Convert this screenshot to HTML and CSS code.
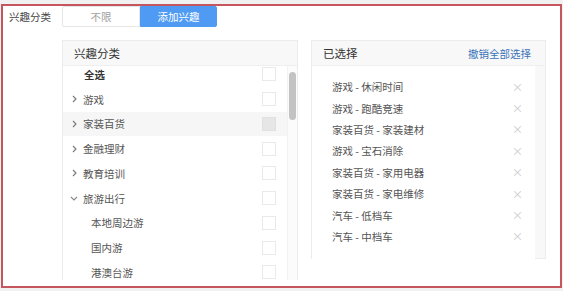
FILE: index.html
```html
<!doctype html>
<html>
<head>
<meta charset="utf-8">
<title>兴趣分类</title>
<link rel="stylesheet" href="styles.css">
</head>
<body>
<div class="frame">
    <div class="field">
        <span class="field-label">兴趣分类</span>
        <div class="tabs">
            <button class="tab">不限</button>
            <button class="tab on">添加兴趣</button>
        </div>
    </div>
    <div class="pick">
        <div class="panel tree">
            <div class="panel-head">兴趣分类</div>
            <div class="tree-body">
                <ul class="tree-list">
                    <li class="row all"><span class="name">全选</span><i class="box"></i></li>
                    <li class="row"><span class="arrow"><svg width="5" height="8" viewBox="0 0 5 8"><path d="M1 1l3 3-3 3" fill="none" stroke="#777" stroke-width="1.1"/></svg></span><span class="name">游戏</span><i class="box"></i></li>
                    <li class="row hover"><span class="arrow"><svg width="5" height="8" viewBox="0 0 5 8"><path d="M1 1l3 3-3 3" fill="none" stroke="#777" stroke-width="1.1"/></svg></span><span class="name">家装百货</span><i class="box"></i></li>
                    <li class="row"><span class="arrow"><svg width="5" height="8" viewBox="0 0 5 8"><path d="M1 1l3 3-3 3" fill="none" stroke="#777" stroke-width="1.1"/></svg></span><span class="name">金融理财</span><i class="box"></i></li>
                    <li class="row"><span class="arrow"><svg width="5" height="8" viewBox="0 0 5 8"><path d="M1 1l3 3-3 3" fill="none" stroke="#777" stroke-width="1.1"/></svg></span><span class="name">教育培训</span><i class="box"></i></li>
                    <li class="row"><span class="arrow down"><svg width="8" height="5" viewBox="0 0 8 5"><path d="M1 1l3 3 3-3" fill="none" stroke="#888" stroke-width="1.1"/></svg></span><span class="name">旅游出行</span><i class="box"></i></li>
                    <li class="row sub"><span class="name">本地周边游</span><i class="box"></i></li>
                    <li class="row sub"><span class="name">国内游</span><i class="box"></i></li>
                    <li class="row sub"><span class="name">港澳台游</span><i class="box"></i></li>
                </ul>
                <div class="bar"><i></i></div>
            </div>
        </div>
        <div class="panel chosen">
            <div class="panel-head">已选择<a class="undo">撤销全部选择</a></div>
            <div class="chosen-body">
                <ul class="chosen-list">
                    <li>游戏 - 休闲时间<span class="x">×</span></li>
                    <li>游戏 - 跑酷竞速<span class="x">×</span></li>
                    <li>家装百货 - 家装建材<span class="x">×</span></li>
                    <li>游戏 - 宝石消除<span class="x">×</span></li>
                    <li>家装百货 - 家用电器<span class="x">×</span></li>
                    <li>家装百货 - 家电维修<span class="x">×</span></li>
                    <li>汽车 - 低档车<span class="x">×</span></li>
                    <li>汽车 - 中档车<span class="x">×</span></li>
                </ul>
            </div>
        </div>
    </div>
</div>
</body>
</html>
```

FILE: styles.css
```css
html,body{
    margin: 0;
    height: 100%;
}
body{
    background-color: #f1f1f1;
    font-family: "Noto Sans CJK SC", sans-serif;
    font-size: 10.5px;
    color: #555;
    padding-top: 4px;
    box-sizing: border-box;
    overflow: hidden;
}
ul{
    list-style: none;
    margin: 0;
    padding: 0;
}
.frame{
    margin: 0 1px;
    width: 561px;
    height: 284px;
    box-sizing: border-box;
    border: 2px solid #c6565d;
    background-color: #fff;
}
.field{
    display: flex;
    align-items: center;
    height: 21px;
}
.field-label{
    width: 53px;
    padding-left: 6px;
    color: #444;
    line-height: 21px;
}
.tabs{
    display: flex;
    height: 21px;
}
.tab{
    font: inherit;
    height: 21px;
    margin: 0;
    padding: 0;
    border: 1px solid #e6e6e6;
    background-color: #fff;
    color: #a0a0a0;
    width: 78px;
    border-radius: 2px 0 0 2px;
}
.tab.on{
    width: 77px;
    border-color: #4f9bf3;
    background-color: #4f9bf3;
    color: #fff;
    border-radius: 0 2px 2px 0;
}

.pick{
    display: flex;
    align-items: flex-start;
    gap: 13px;
    margin: 13px 0 0 59px;
}
.panel{
    box-sizing: border-box;
    border: 1px solid #ececec;
    background-color: #f8f8f8;
}
.panel-head{
    display: flex;
    justify-content: space-between;
    align-items: center;
    height: 24px;
    padding: 0 14px 0 11px;
    font-size: 11.5px;
    color: #333;
    border-bottom: 1px solid #efefef;
}
.tree{
    width: 236px;
    height: 240px;
}
.tree-body{
    display: flex;
    height: 214px;
    overflow: hidden;
    background-color: #fff;
}
.tree-list{
    width: 224px;
    margin-top: -4px;
}
.row{
    display: flex;
    align-items: center;
    height: 24.75px;
    padding-left: 6px;
    color: #555;
}
.row.hover{
    background-color: #f6f6f6;
}
.arrow{
    width: 14px;
    display: flex;
    align-items: center;
    padding-left: 3px;
    box-sizing: border-box;
}
.arrow.down{
    padding-left: 1px;
}
.name{
    flex: 1;
}
.row.all{
    padding-left: 21px;
    font-weight: bold;
    color: #333;
}
.row.sub{
    padding-left: 28px;
}
.box{
    width: 14px;
    height: 14px;
    box-sizing: border-box;
    border: 1px solid #e9e9e9;
    background-color: #fff;
    margin-right: 11px;
}
.row.hover .box{
    background-color: #e6e6e6;
    border-color: #e0e0e0;
}
.bar{
    flex: 1;
    border-left: 1px solid #f2f2f2;
    background-color: #fbfbfb;
}
.bar i{
    display: block;
    width: 7px;
    height: 48px;
    margin: 6px 0 0 1px;
    border-radius: 4px;
    background-color: #c3c3c3;
}

.chosen{
    width: 235px;
    height: 219px;
}
.undo{
    color: #3a72b8;
    font-size: 10.5px;
    cursor: pointer;
}
.chosen-body{
    width: 223px;
    height: 193px;
    background-color: #fff;
    padding-top: 10px;
    box-sizing: border-box;
}
.chosen-list li{
    display: flex;
    justify-content: space-between;
    align-items: center;
    height: 21.4px;
    padding: 0 12px 0 20px;
    color: #555;
}
.x{
    color: #c9c9c9;
    font-size: 11px;
}
```
